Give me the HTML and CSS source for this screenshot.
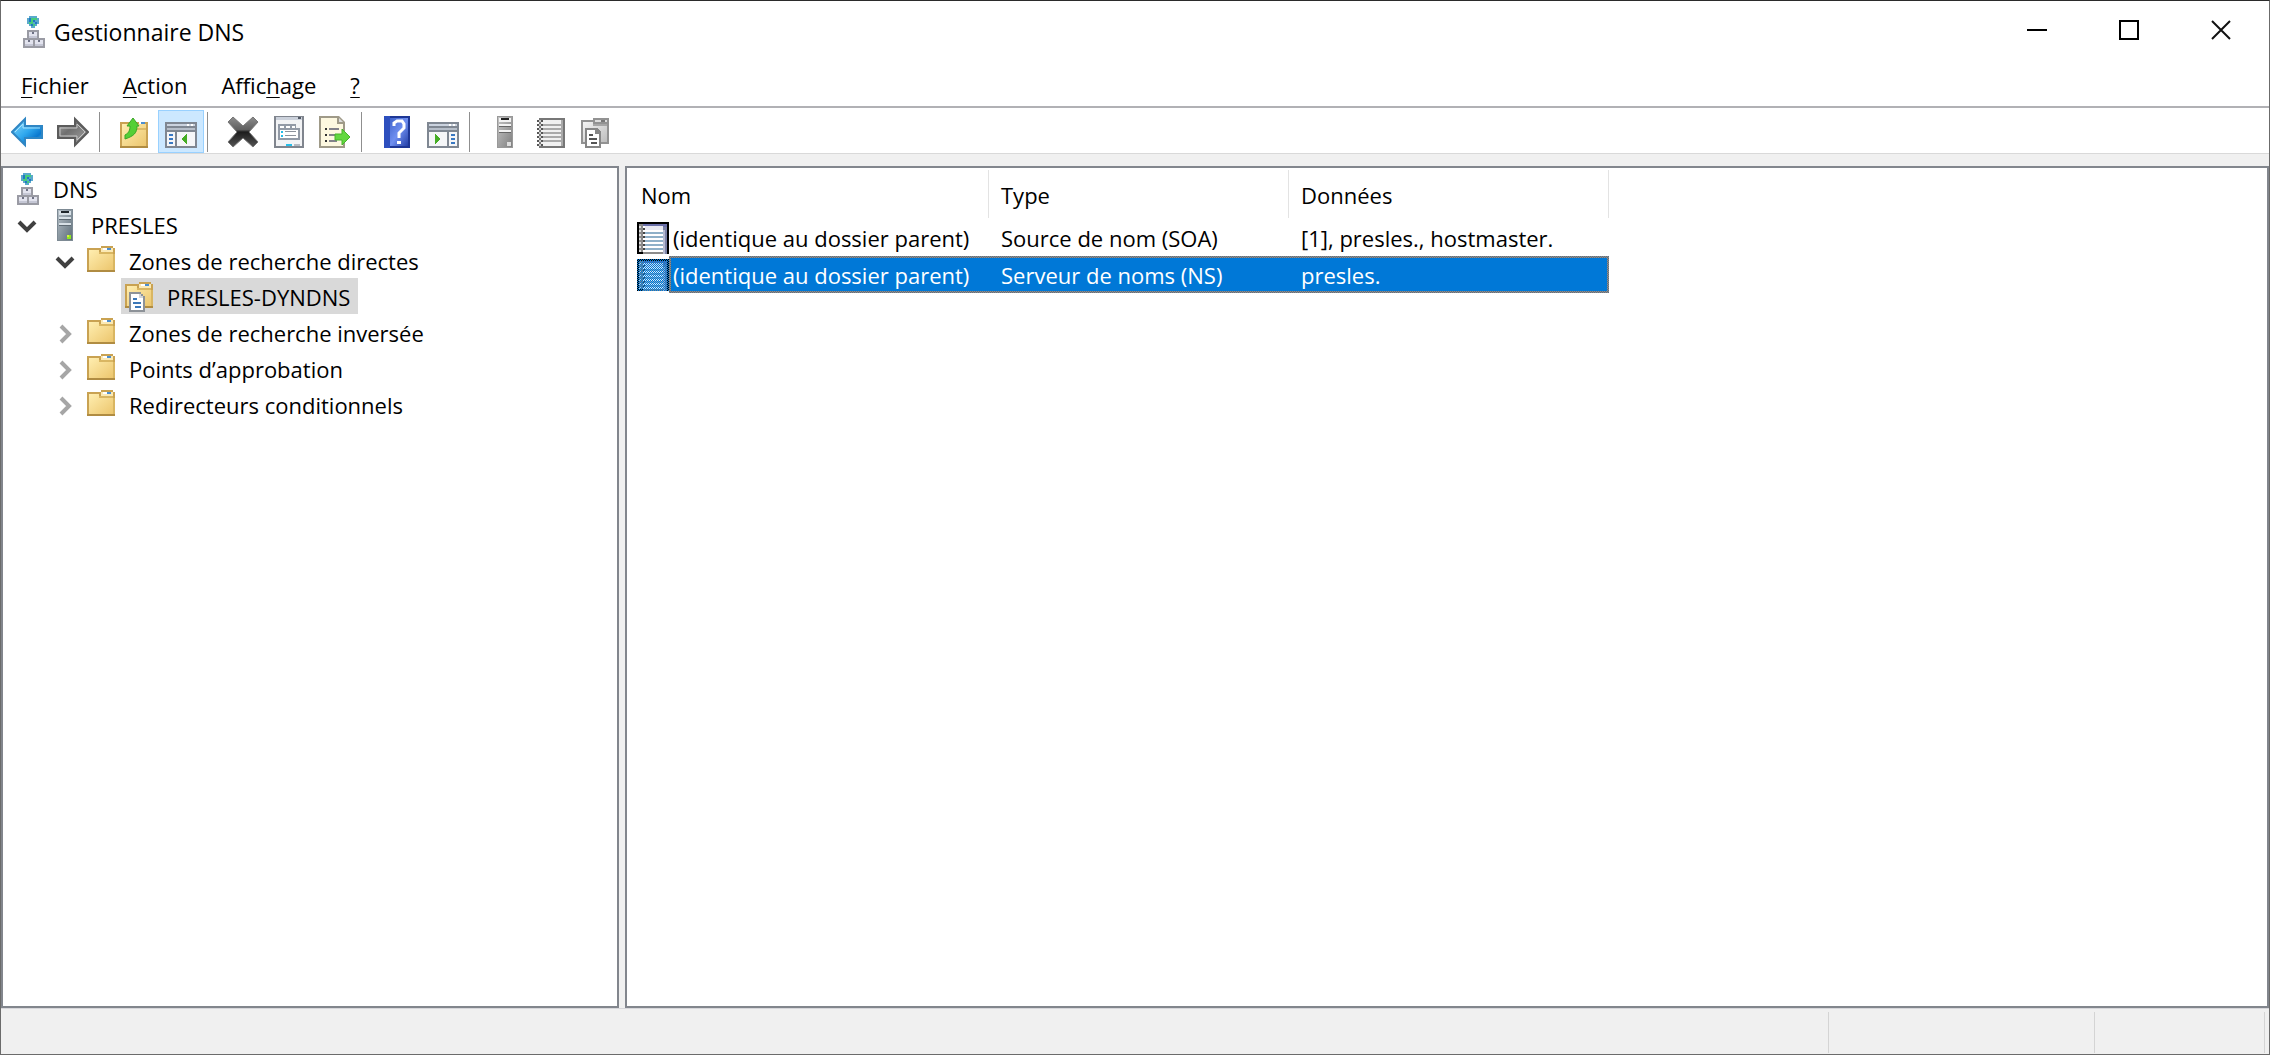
FILE: index.html
```html
<!DOCTYPE html>
<html lang="fr">
<head>
<meta charset="utf-8">
<meta name="viewport" content="width=device-width, initial-scale=1">
<title>Gestionnaire DNS</title>
<link rel="stylesheet" href="styles.css">
</head>
<body>
<svg class="sprite" aria-hidden="true">
  <defs>
    <linearGradient id="g-blue" x1="0" y1="0" x2="1" y2="1"><stop offset="0" stop-color="#8fdcfb"/><stop offset=".5" stop-color="#2fa8ee"/><stop offset=".75" stop-color="#0a78cf"/><stop offset="1" stop-color="#5cc4f5"/></linearGradient>
    <linearGradient id="g-gray" x1="0" y1="0" x2="1" y2="1"><stop offset="0" stop-color="#a5a5a5"/><stop offset=".4" stop-color="#6f6f6f"/><stop offset="1" stop-color="#a8a8a8"/></linearGradient>
    <linearGradient id="g-folder" x1="0" y1="0" x2="1" y2="1"><stop offset="0" stop-color="#ffeeb0"/><stop offset="1" stop-color="#ecc66e"/></linearGradient>
    <linearGradient id="g-pale" x1="0" y1="0" x2="1" y2="1"><stop offset="0" stop-color="#f4f4f4"/><stop offset="1" stop-color="#bdbdbd"/></linearGradient>
    <linearGradient id="g-cross" x1="0" y1="0" x2="0" y2="1"><stop offset="0" stop-color="#8c8c8c"/><stop offset=".42" stop-color="#606060"/><stop offset=".5" stop-color="#1c1c1c"/><stop offset="1" stop-color="#555"/></linearGradient>
    <linearGradient id="g-help" x1="0" y1="0" x2="1" y2="1"><stop offset="0" stop-color="#3f63cc"/><stop offset=".5" stop-color="#6f8ff0"/><stop offset="1" stop-color="#2440a8"/></linearGradient>
    <linearGradient id="g-tower" x1="0" y1="0" x2="1" y2="1"><stop offset="0" stop-color="#b4bec6"/><stop offset="1" stop-color="#5f6f7a"/></linearGradient>
    <linearGradient id="g-tower-gray" x1="0" y1="0" x2="1" y2="1"><stop offset="0" stop-color="#c4c4c4"/><stop offset="1" stop-color="#808080"/></linearGradient>
    <pattern id="dither" width="2" height="2" patternUnits="userSpaceOnUse"><path fill="#0078d7" d="M0 0h1v1H0zM1 1h1v1H1z"/></pattern>
  </defs>

  <symbol id="i-dns" viewBox="0 0 32 32">
    <path fill="#5aa9cc" d="M12 0h8v2h2v6h-2v2h-2v2h-4v-2h-2V8h-2V2h2z"/>
    <path fill="#2277c4" d="M12 2h2v4h-2zM16 4h2v2h-2zM18 6h2v2h-2zM14 8h2v2h-2z"/>
    <path fill="#45cc7c" d="M14 2h4v2h-2v2h-2zM18 2h2v2h-2zM12 6h4v2h-4zM16 8h2v2h-2z"/>
    <path fill="#9a9ba4" d="M10 14h12v8h-12zM6 22h22v10H6z"/>
    <path fill="#e2e3ee" d="M12 16h8v6h-8zM8 24h8v6H8zM18 24h8v6h-8z"/>
    <path fill="#c5c7d5" d="M12 20h8v2h-8zM8 28h8v2H8zM18 28h8v2h-8z"/>
    <path fill="#6e7184" d="M15 16h2v2h-2zM11 24h2v2h-2zM21 24h2v2h-2z"/>
  </symbol>
  <symbol id="i-server" viewBox="0 0 32 32">
    <path fill="#7d8a94" d="M8 0h16v32H8z"/><path fill="url(#g-tower)" d="M9 1h14v30H9z"/>
    <path fill="#d7e0e6" d="M10 2h12v4H10zM10 8h12v2H10zM10 14h12v2H10z"/>
    <path fill="#1f262b" d="M12 2h8v2h-8z"/><path fill="#5e6a73" d="M10 10h12v1H10zM10 16h12v1H10z"/>
    <path fill="#8eea1f" d="M18 26h4v4h-4z"/><path fill="#d6f23c" d="M18 26h2v2h-2z"/>
  </symbol>
  <symbol id="i-server-gray" viewBox="0 0 32 32">
    <path fill="#999" d="M8 0h16v32H8z"/><path fill="url(#g-tower-gray)" d="M9 1h14v30H9z"/>
    <path fill="#f2f2f2" d="M10 2h12v4H10zM10 8h12v2H10zM10 14h12v2H10z"/>
    <path fill="#222" d="M12 2h8v2h-8z"/><path fill="#666" d="M10 10h12v1H10zM10 16h12v1H10z"/>
    <path fill="#ddd" d="M18 26h4v4h-4z"/>
  </symbol>
  <symbol id="i-folder" viewBox="0 -1 32 32">
    <path fill="#c9a252" d="M12 2h2V0h12v2h2v24H0V2z"/>
    <path fill="url(#g-folder)" d="M2 4h10v4h14v16H2z"/><path fill="#fbe9b4" d="M14 2h12v4H14z"/>
    <path fill="#fff" d="M16 2h4v2h-4z"/><path fill="#4b8ed0" d="M20 2h4v2h-4z"/>
    <path fill="#d9b662" d="M12 6h14v2H12zM26 8h2v16h-2z"/><path fill="#b08c42" d="M0 24h28v2H0z"/>
  </symbol>
  <symbol id="i-zone" viewBox="0 0 32 32">
    <use href="#i-folder" width="32" height="32"/>
    <g transform="translate(0 1)">
      <path fill="#8d9298" d="M4 10h12v2h2v2h2v16H4z"/><path fill="#fff" d="M6 12h8v4h4v12H6z"/>
      <path fill="#d3d6da" d="M14 12h2v2h2v2h-4z"/><path fill="#3d78b8" d="M8 16h4v2H8zM8 20h8v2H8zM10 24h6v2h-6z"/>
    </g>
  </symbol>
  <symbol id="i-record" viewBox="0 0 32 32">
    <path fill="#000" d="M0 0h32v32H0z"/><path fill="#6a6fa8" d="M6 2h24v3H6z"/>
    <path fill="#7d84a8" d="M26 5h4v27h-4z"/><path fill="#b5bad0" d="M26 8h2v24h-2z"/>
    <path fill="#fff" d="M6 4h20v28H6z"/><path fill="#e9e9f2" d="M8 4h18v4H8z"/>
    <path fill="#8fb0c8" d="M8 10h18v2H8zM8 14h18v2H8zM8 18h18v2H8zM8 22h18v2H8zM8 26h18v2H8z"/>
    <path fill="#8b8b8b" d="M2 2h4v28H2zM6 30h20v2H6z"/>
    <path fill="#ddd" d="M2 4h2v2H2zM2 8h2v2H2zM2 12h2v2H2zM2 16h2v2H2zM2 20h2v2H2zM2 24h2v2H2zM2 28h2v2H2z"/>
    <path fill="#444" d="M6 6h2v2H6zM6 10h2v2H6zM6 14h2v2H6zM6 18h2v2H6zM6 22h2v2H6zM6 26h2v2H6z"/>
  </symbol>
  <symbol id="i-record-selected" viewBox="0 0 32 32">
    <use href="#i-record" width="32" height="32"/><path fill="url(#dither)" d="M0 0h32v32H0z"/>
    <path fill="#0078d7" fill-opacity=".15" d="M2 2h28v30H2z"/>
  </symbol>
  <symbol id="i-open" viewBox="0 0 20 20"><path fill="none" stroke="#404040" stroke-width="4" d="M2 6l8 8 8-8"/></symbol>
  <symbol id="i-closed" viewBox="0 0 20 20"><path fill="none" stroke="#a6a6a6" stroke-width="4" d="M6 2l8 8-8 8"/></symbol>

  <symbol id="i-back" viewBox="0 0 32 32"><path fill="url(#g-blue)" stroke="#2f86c4" stroke-width="2" d="M1 16L14 3v7h17v12H14v7z"/><path fill="none" stroke="#a9e2fb" stroke-width="1" d="M4 16l8-8v4h17"/></symbol>
  <symbol id="i-forward" viewBox="0 0 32 32"><path fill="url(#g-gray)" stroke="#5b5b5b" stroke-width="2" d="M31 16L18 3v7H1v12h17v7z"/><path fill="none" stroke="#c6c6c6" stroke-width="1" d="M28 16l-8-8v4H3v8h17v4z"/></symbol>
  <symbol id="i-up" viewBox="0 0 32 32">
    <path fill="#c9a252" d="M1 6h28v26H1z"/><path fill="url(#g-folder)" d="M3 8h24v22H3z"/><path fill="#dcb967" d="M18 12h9v2h-9z"/>
    <path fill="#fff" d="M20 6h2v2h-2z"/><path fill="#4b8ed0" d="M22 6h4v2h-4z"/><path fill="#b08c42" d="M1 30h28v2H1z"/>
    <path fill="#55cf36" stroke="#39a526" d="M14 2l6 8h-2c0 7-3 10-12 13v-4c4-2 5-5 5-9H8z"/>
  </symbol>
  <symbol id="i-tree-pane" viewBox="0 0 32 32">
    <path fill="#7f8792" d="M0 6h32v26H0z"/><path fill="#cbd3df" d="M2 8h28v2H2z"/><path fill="#f5f6f8" d="M2 16h8v14H2zM12 16h18v14H12z"/><path fill="#b7bfca" d="M2 12h28v2H2z"/>
    <path fill="#fff" d="M22 8h2v2h-2zM26 8h2v2h-2z"/><path fill="#3978c2" d="M4 18h4v2H4zM4 22h4v2H4zM4 26h4v2H4z"/><path fill="#45ad25" d="M22 18v10l-6-5z"/>
  </symbol>
  <symbol id="i-delete" viewBox="0 0 32 32"><path fill="url(#g-cross)" stroke="#777" d="M6 1l10 9L26 1l5 5-9 10 9 10-5 5-10-9-10 9-5-5 9-10L1 6z"/></symbol>
  <symbol id="i-properties" viewBox="0 0 32 32">
    <path fill="#80858e" d="M1 0h30v32H1z"/><path fill="#f2f3f5" d="M3 4h26v26H3z"/><path fill="#cbd1db" d="M3 1h26v3H3z"/><path fill="#525965" d="M25 1h3v2h-3z"/>
    <path fill="#929aa6" d="M5 8h18v4h4v12H5z"/><path fill="#fff" d="M7 14h18v8H7zM7 10h4v2H7zM13 10h4v2h-4zM19 10h3v2h-3z"/>
    <path fill="#25bde8" d="M8 15h2v2H8zM8 19h2v2H8zM13 28h6v2h-6z"/><path fill="#8d939c" d="M12 15h11v1H12zM12 19h11v1H12z"/><path fill="#b5bac2" d="M21 28h6v2h-6z"/>
  </symbol>
  <symbol id="i-export" viewBox="0 0 32 32">
    <path fill="#9f9a88" d="M0 0h20l6 6v26H0z"/><path fill="#fdf8e0" d="M2 2h16v6h6v22H2z"/><path fill="#ddd" d="M20 2l4 4h-4z"/>
    <path fill="#333" d="M6 12h2v2H6zM6 18h2v2H6zM6 24h2v2H6z"/><path fill="#83828a" d="M10 12h10v2H10zM10 18h8v2h-8zM10 24h8v2h-8z"/>
    <path fill="#62d83f" stroke="#46b42b" d="M16 18h7v-5l8 8-8 8v-5h-7z"/>
  </symbol>
  <symbol id="i-help" viewBox="0 0 32 32">
    <path fill="#1e3796" d="M3 0h26v32H3z"/><path fill="#2d4fbe" d="M3 0h6v32H3z"/><path fill="url(#g-help)" d="M9 2h18v28H9z"/>
    <path fill="none" stroke="#fff" stroke-width="3" d="M13 10V7l3-2h5l2 3v4l-5 5v5"/><path fill="#fff" d="M16 25h4v3h-4z"/>
  </symbol>
  <symbol id="i-action-pane" viewBox="0 0 32 32">
    <path fill="#7f8792" d="M0 6h32v26H0z"/><path fill="#cbd3df" d="M2 8h28v2H2z"/><path fill="#f5f6f8" d="M2 16h18v14H2zM22 16h8v14h-8z"/><path fill="#b7bfca" d="M2 12h28v2H2z"/>
    <path fill="#fff" d="M22 8h2v2h-2zM26 8h2v2h-2z"/><path fill="#3978c2" d="M24 18h4v2h-4zM24 22h4v2h-4zM24 26h4v2h-4z"/><path fill="#45ad25" d="M8 18v10l6-5z"/>
  </symbol>
  <symbol id="i-notebook" viewBox="0 0 32 32">
    <path fill="#777" d="M4 2h26v30H4z"/><path fill="#f1f1f1" d="M6 4h20v26H6z"/><path fill="#aaa" d="M26 4h2v26h-2zM8 8h18v2H8zM8 12h18v2H8zM8 16h18v2H8zM8 20h18v2H8zM8 24h18v2H8z"/>
    <path fill="#555" d="M2 4h6v2H2zM2 8h6v2H2zM2 12h6v2H2zM2 16h6v2H2zM2 20h6v2H2zM2 24h6v2H2zM2 28h6v2H2z"/><path fill="#ccc" d="M4 4h2v2H4zM4 8h2v2H4zM4 12h2v2H4zM4 16h2v2H4zM4 20h2v2H4zM4 24h2v2H4zM4 28h2v2H4z"/>
  </symbol>
  <symbol id="i-zone-gray" viewBox="0 0 32 32">
    <path fill="#929292" d="M0 4h12V2h16v26H0z"/><path fill="url(#g-pale)" d="M2 6h10v4h14v16H2z"/><path fill="#ddd" d="M14 4h12v2H14z"/><path fill="#777" d="M20 4h4v2h-4z"/><path fill="#a6a6a6" d="M12 8h14v2H12z"/>
    <path fill="#868686" d="M4 12h12l4 4v16H4z"/><path fill="#fff" d="M6 14h8v4h4v12H6z"/><path fill="#555" d="M8 18h4v2H8zM8 22h8v2H8zM10 26h6v2h-6z"/>
  </symbol>

  <symbol id="i-minimize" viewBox="0 0 20 20"><path fill="#000" d="M0 9h20v2H0z"/></symbol>
  <symbol id="i-maximize" viewBox="0 0 20 20"><path fill="none" stroke="#000" stroke-width="2" d="M1 1h18v18H1z"/></symbol>
  <symbol id="i-close" viewBox="0 0 20 20"><path fill="none" stroke="#111" stroke-width="2" d="M1 1l18 18M19 1L1 19"/></symbol>
</svg>

<div class="window">
  <header class="titlebar">
    <svg class="icon"><use href="#i-dns"/></svg>
    <h1 class="title">Gestionnaire DNS</h1>
    <button class="caption" aria-label="Réduire"><svg class="glyph"><use href="#i-minimize"/></svg></button>
    <button class="caption" aria-label="Agrandir"><svg class="glyph"><use href="#i-maximize"/></svg></button>
    <button class="caption" aria-label="Fermer"><svg class="glyph glyph-smooth"><use href="#i-close"/></svg></button>
  </header>

  <nav class="menubar">
    <button class="menu"><u>F</u>ichier</button>
    <button class="menu"><u>A</u>ction</button>
    <button class="menu">Affic<u>h</u>age</button>
    <button class="menu"><u>?</u></button>
  </nav>

  <div class="toolbar" role="toolbar">
    <div class="group">
      <button class="tool" aria-label="Précédent"><svg class="icon icon-smooth"><use href="#i-back"/></svg></button>
      <button class="tool" aria-label="Suivant"><svg class="icon icon-smooth"><use href="#i-forward"/></svg></button>
    </div>
    <div class="group">
      <button class="tool" aria-label="Dossier parent"><svg class="icon icon-smooth"><use href="#i-up"/></svg></button>
      <button class="tool tool-on" aria-pressed="true" aria-label="Arborescence"><svg class="icon"><use href="#i-tree-pane"/></svg></button>
    </div>
    <div class="group">
      <button class="tool" aria-label="Supprimer"><svg class="icon icon-smooth"><use href="#i-delete"/></svg></button>
      <button class="tool" aria-label="Propriétés"><svg class="icon"><use href="#i-properties"/></svg></button>
      <button class="tool" aria-label="Exporter la liste"><svg class="icon icon-smooth"><use href="#i-export"/></svg></button>
    </div>
    <div class="group">
      <button class="tool" aria-label="Aide"><svg class="icon icon-smooth"><use href="#i-help"/></svg></button>
      <button class="tool" aria-label="Volet Actions"><svg class="icon"><use href="#i-action-pane"/></svg></button>
    </div>
    <div class="group">
      <button class="tool" aria-label="Serveur"><svg class="icon"><use href="#i-server-gray"/></svg></button>
      <button class="tool" aria-label="Enregistrement"><svg class="icon"><use href="#i-notebook"/></svg></button>
      <button class="tool" aria-label="Nouvelle zone"><svg class="icon"><use href="#i-zone-gray"/></svg></button>
    </div>
  </div>

  <main class="panes">
    <section class="pane">
      <ul class="tree" role="tree">
        <li role="treeitem" aria-expanded="true">
          <div class="node"><span class="item"><svg class="icon"><use href="#i-dns"/></svg>DNS</span></div>
          <ul class="branch" role="group">
            <li role="treeitem" aria-expanded="true">
              <div class="node"><button class="expander" aria-label="Réduire PRESLES"><svg class="glyph glyph-smooth"><use href="#i-open"/></svg></button><span class="item"><svg class="icon"><use href="#i-server"/></svg>PRESLES</span></div>
              <ul class="branch" role="group">
                <li role="treeitem" aria-expanded="true">
                  <div class="node"><button class="expander" aria-label="Réduire les zones directes"><svg class="glyph glyph-smooth"><use href="#i-open"/></svg></button><span class="item"><svg class="icon"><use href="#i-folder"/></svg>Zones de recherche directes</span></div>
                  <ul class="branch" role="group">
                    <li role="treeitem" aria-selected="true">
                      <div class="node node-leaf"><span class="item item-selected"><svg class="icon"><use href="#i-zone"/></svg>PRESLES-DYNDNS</span></div>
                    </li>
                  </ul>
                </li>
                <li role="treeitem" aria-expanded="false">
                  <div class="node"><button class="expander" aria-label="Développer les zones inversées"><svg class="glyph glyph-smooth"><use href="#i-closed"/></svg></button><span class="item"><svg class="icon"><use href="#i-folder"/></svg>Zones de recherche inversée</span></div>
                </li>
                <li role="treeitem" aria-expanded="false">
                  <div class="node"><button class="expander" aria-label="Développer les points"><svg class="glyph glyph-smooth"><use href="#i-closed"/></svg></button><span class="item"><svg class="icon"><use href="#i-folder"/></svg>Points d’approbation</span></div>
                </li>
                <li role="treeitem" aria-expanded="false">
                  <div class="node"><button class="expander" aria-label="Développer les redirecteurs"><svg class="glyph glyph-smooth"><use href="#i-closed"/></svg></button><span class="item"><svg class="icon"><use href="#i-folder"/></svg>Redirecteurs conditionnels</span></div>
                </li>
              </ul>
            </li>
          </ul>
        </li>
      </ul>
    </section>

    <section class="pane">
      <table class="records">
        <colgroup><col class="col-name"><col class="col-type"><col class="col-data"></colgroup>
        <thead>
          <tr><th scope="col">Nom</th><th scope="col">Type</th><th scope="col">Données</th></tr>
        </thead>
        <tbody>
          <tr>
            <td><div class="name"><svg class="icon"><use href="#i-record"/></svg><span class="cell cell-first">(identique au dossier parent)</span></div></td>
            <td><div class="cell">Source de nom (SOA)</div></td>
            <td><div class="cell cell-last">[1], presles., hostmaster.</div></td>
          </tr>
          <tr class="selected">
            <td><div class="name"><svg class="icon"><use href="#i-record-selected"/></svg><span class="cell cell-first">(identique au dossier parent)</span></div></td>
            <td><div class="cell">Serveur de noms (NS)</div></td>
            <td><div class="cell cell-last">presles.</div></td>
          </tr>
        </tbody>
      </table>
    </section>
  </main>

  <footer class="statusbar">
    <div class="status status-main"></div>
    <div class="status status-mid"></div>
    <div class="status status-end"></div>
  </footer>
</div>
</body>
</html>
```

FILE: styles.css
```css
* { box-sizing: border-box; }

body {
  margin: 0;
  font: 22px/36px "Open Sans", "Noto Sans", sans-serif;
  color: #000;
  background: #fff;
}

button {
  margin: 0;
  padding: 0;
  border: 0;
  background: none;
  font: inherit;
  color: inherit;
}

ul { margin: 0; padding: 0; list-style: none; }

.sprite { position: absolute; width: 0; height: 0; }

.icon {
  flex: none;
  width: 32px;
  height: 32px;
  shape-rendering: crispEdges;
}

.glyph {
  flex: none;
  width: 20px;
  height: 20px;
  shape-rendering: crispEdges;
}

.icon-smooth, .glyph-smooth { shape-rendering: auto; }

.window {
  display: flex;
  flex-direction: column;
  min-height: 100vh;
  border: 1px solid #6b6b6b;
  border-top-color: #2b2b2b;
  background: #f0f0f0;
}

/* Title bar */
.titlebar {
  display: flex;
  align-items: center;
  height: 62px;
  padding: 0 2px 0 16px;
  background: #fff;
}

.title {
  flex: 1;
  margin: 0 0 0 5px;
  font: inherit;
  font-size: 23px;
}

.caption {
  display: flex;
  align-items: center;
  justify-content: center;
  width: 92px;
  height: 58px;
  align-self: flex-start;
}

/* Menu bar */
.menubar {
  display: flex;
  align-items: center;
  height: 45px;
  padding-left: 3px;
  background: #fff;
  border-bottom: 2px solid #b1b1b5;
}

.menu { padding: 0 17px; }

.menu u {
  text-decoration-thickness: 1px;
  text-underline-offset: 3px;
}

/* Toolbar */
.toolbar {
  display: flex;
  height: 46px;
  padding: 2px 0 0 3px;
  background: #fff;
  border-bottom: 1px solid #d9d9d9;
}

.group { display: flex; }

.group + .group::before {
  content: "";
  width: 1px;
  margin: 2px 12px 1px 3px;
  background: #8f8f8f;
}

.tool {
  display: flex;
  align-items: center;
  justify-content: center;
  width: 46px;
}

.tool-on {
  background: #cce8ff;
  border: 1px solid #99d1ff;
}

/* Panes */
.panes {
  flex: 1;
  display: grid;
  grid-template-columns: 618px 1fr;
  gap: 6px;
  padding-top: 12px;
}

.pane {
  min-width: 0;
  border: 2px solid #82868d;
  background: #fff;
}

/* Tree */
.tree { padding: 2px 0 0 4px; }

.branch .branch { padding-left: 38px; }

.node { display: flex; height: 36px; }

.expander {
  display: flex;
  align-items: center;
  width: 38px;
  padding: 4px 0 0 10px;
}

.node-leaf { padding-left: 38px; }

.item {
  display: flex;
  align-items: center;
  gap: 10px;
  padding: 2px 8px 0 4px;
}

.item-selected { background: #d9d9d9; }

/* Records */
.records {
  width: 982px;
  table-layout: fixed;
  border-collapse: collapse;
}

.col-name { width: 362px; }
.col-type { width: 300px; }
.col-data { width: 320px; }

th {
  height: 51px;
  padding: 3px 12px 0;
  background: linear-gradient(#e3e3e3, #e3e3e3) no-repeat right 0 top 2px / 1px 48px;
  font-weight: normal;
  text-align: left;
}

th:first-child { padding-left: 14px; }

td { height: 37px; padding: 0; }

.name { display: flex; align-items: center; padding-left: 10px; }

.cell {
  height: 37px;
  padding-left: 12px;
  border: 0 solid transparent;
  border-width: 2px 0;
  line-height: 34px;
  white-space: nowrap;
}

.cell-first { flex: 1; padding-left: 2px; border-left-width: 2px; }
.cell-last { border-right-width: 2px; }

.selected .cell {
  color: #fff;
  background:
    linear-gradient(#0078d7, #0078d7) padding-box,
    repeating-conic-gradient(#4f6f90 0 25%, #a08c78 0 50%) 0 0 / 2px 2px border-box;
}

/* Status bar */
.statusbar {
  display: flex;
  height: 46px;
  padding: 3px 4px 1px 0;
  border-top: 1px solid #d7d7db;
}

.status { border-right: 1px solid #d4d4d4; }
.status-main { flex: 1; }
.status-mid { width: 266px; }
.status-end { width: 170px; }
```
